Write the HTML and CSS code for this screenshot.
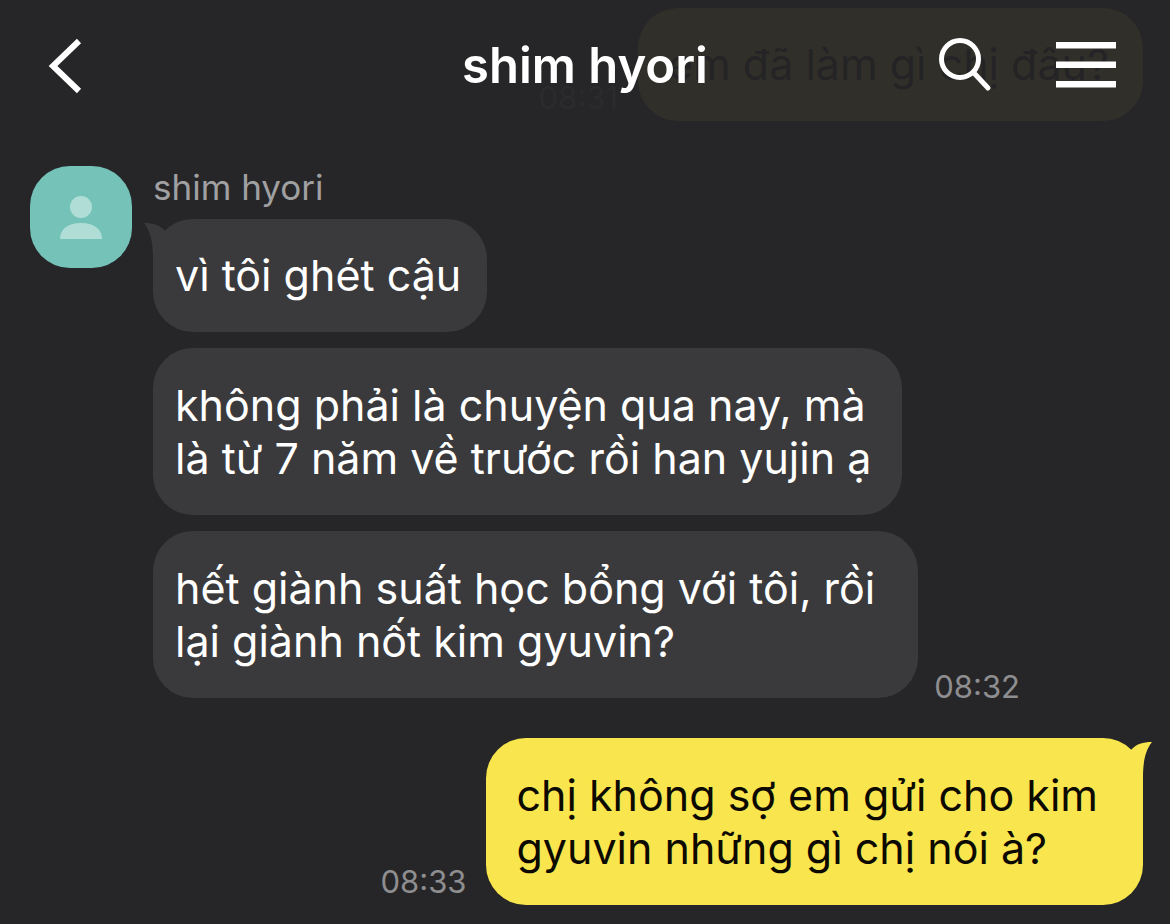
FILE: index.html
```
<!DOCTYPE html>
<html lang="vi">
<head>
    <meta charset="UTF-8">
    <meta name="viewport" content="width=device-width, initial-scale=1.0">
    <title>shim hyori</title>
    <link rel="stylesheet" href="styles.css">
</head>
<body>
    <header class="header">
        <button type="button" class="icon-button back" aria-label="Back">
            <svg width="34" height="58" viewBox="0 0 34 58" fill="none" stroke="#fff" stroke-width="6">
                <path d="M31 4 5 29l26 25"/>
            </svg>
        </button>
        <h1>shim hyori</h1>
        <div class="actions">
            <button type="button" class="icon-button" aria-label="Search">
                <svg width="54" height="56" viewBox="0 0 54 56" fill="none" stroke="#fff" stroke-width="5" stroke-linecap="round">
                    <circle cx="22" cy="21" r="18.5"/>
                    <path d="M36 35 50 50"/>
                </svg>
            </button>
            <button type="button" class="icon-button" aria-label="Menu">
                <svg width="60" height="48" viewBox="0 0 60 48" fill="#fff">
                    <path d="M0 0h60v6.500H0zM0 19.500h60V26H0zM0 39h60v6.500H0z"/>
                </svg>
            </button>
        </div>
    </header>

    <main class="messages">
        <div class="row sent">
            <time class="time">08:31</time>
            <p class="bubble">em đã làm gì chị đâu?</p>
        </div>

        <div class="row received">
            <div class="avatar">
                <svg width="44" height="46" viewBox="0 0 44 46" fill="#b0ded7">
                    <circle cx="22" cy="13" r="11"/>
                    <path d="M1 45C1 35 9 29 22 29s21 6 21 16z"/>
                </svg>
            </div>
            <div class="group">
                <span class="name">shim hyori</span>
                <p class="bubble">
                    <svg class="tail" width="24" height="36" viewBox="0 0 24 36"><path d="M0 0C9 0 16 2 21 8L24 36H9C9 20 7 9 0 0z"/></svg>
                    vì tôi ghét cậu
                </p>
                <p class="bubble wrapped">không phải là chuyện qua nay, mà<br>là từ 7 năm về trước rồi han yujin ạ</p>
                <div class="last">
                    <p class="bubble wrapped">hết giành suất học bổng với tôi, rồi<br>lại giành nốt kim gyuvin?</p>
                    <time class="time">08:32</time>
                </div>
            </div>
        </div>

        <div class="row sent">
            <time class="time">08:33</time>
            <p class="bubble wrapped">
                <svg class="tail" width="24" height="36" viewBox="0 0 24 36"><path d="M24 0C15 0 8 2 3 8L0 36h15C15 20 17 9 24 0z"/></svg>
                chị không sợ em gửi cho kim<br>gyuvin những gì chị nói à?
            </p>
        </div>
    </main>
</body>
</html>
```
FILE: styles.css
```
* {
    box-sizing: border-box;
}
body {
    margin: 0;
    background-color: #262628;
    color: #fff;
    font-family: Inter, "Noto Sans", sans-serif;
}
.header {
    position: fixed;
    top: 0;
    left: 0;
    right: 0;
    z-index: 1;
    display: grid;
    grid-template-columns: 1fr auto 1fr;
    align-items: center;
    height: 132px;
    padding: 0 54px;
    background-color: rgba(38, 37, 39, 0.95);
}
.header h1 {
    margin: 0;
    font-size: 49px;
    font-weight: 600;
    line-height: 60px;
}
.icon-button {
    display: flex;
    padding: 0;
    border: none;
    background: none;
    cursor: pointer;
}
.back {
    justify-self: start;
    margin-left: -6px;
}
.actions {
    display: flex;
    align-items: center;
    justify-content: flex-end;
    gap: 64px;
}
.messages {
    padding: 8px 27px 19px 30px;
}
.row {
    display: flex;
}
.bubble {
    position: relative;
    width: fit-content;
    margin: 0;
    padding: 30px 26px 30px 22px;
    border-radius: 40px;
    background-color: #3a3a3c;
    font-size: 43px;
    line-height: 53px;
}
.wrapped {
    padding-top: 31px;
    padding-right: 31px;
}
.last .wrapped {
    padding-right: 43px;
}
.time {
    color: #8e8e90;
    font-size: 31px;
    line-height: 46px;
}
.tail {
    position: absolute;
    top: 4px;
    left: -9px;
    fill: #3a3a3c;
}
.received {
    gap: 21px;
    margin: 45px 0 40px;
}
.avatar {
    display: flex;
    align-items: center;
    justify-content: center;
    width: 102px;
    height: 102px;
    border-radius: 40px;
    background-color: #74c2b8;
}
.group {
    display: flex;
    flex-direction: column;
    gap: 16px;
}
.name {
    margin-bottom: -6px;
    color: #a0a0a2;
    font-size: 35px;
    line-height: 43px;
}
.last {
    display: flex;
    align-items: flex-end;
    gap: 16px;
}
.last .time {
    line-height: 22px;
}
.sent {
    justify-content: flex-end;
    align-items: flex-end;
    gap: 20px;
}
.sent .bubble {
    padding: 30px 34px 30px 30px;
    background-color: #f9e54e;
    color: #0c0a00;
}
.sent .wrapped {
    padding-top: 31px;
    padding-right: 45px;
}
.sent .tail {
    right: -9px;
    left: auto;
    fill: #f9e54e;
}
```
